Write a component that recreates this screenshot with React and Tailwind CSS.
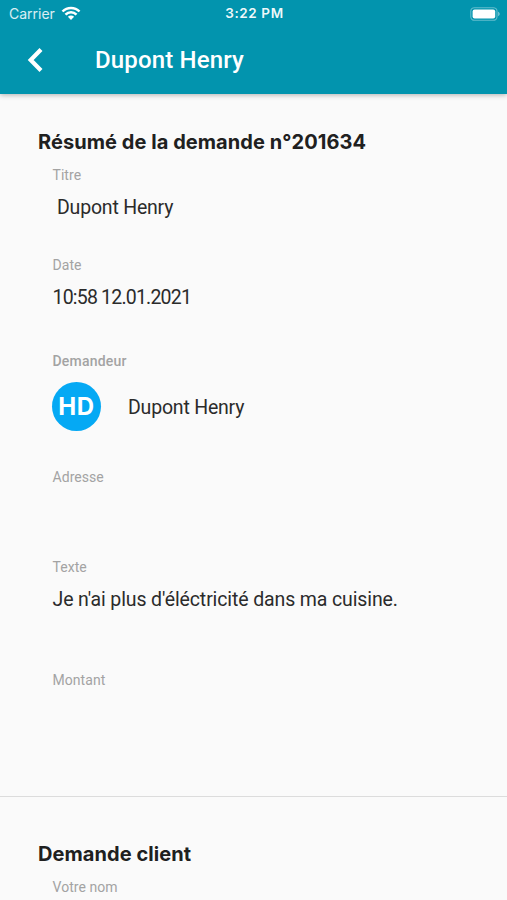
function WifiIcon() {
  return (
    <svg width="20" height="16" viewBox="0 0 20 16" fill="none" stroke="currentColor" strokeWidth="2.5">
      <path d="M1.5 5.5C6.2 0.7 13.8 0.7 18.5 5.5" />
      <path d="M4.5 8.7C7.6 5.5 12.4 5.5 15.5 8.7" />
      <path d="M6.9 10.8C8.7 9.2 11.3 9.2 13.1 10.8L10 14Z" fill="currentColor" stroke="none" />
    </svg>
  );
}

function BatteryIcon() {
  return (
    <svg width="30" height="14" viewBox="0 0 30 14" fill="none">
      <rect x="0.8" y="0.7" width="26.2" height="12.6" rx="3.6" stroke="#fff" strokeOpacity="0.38" strokeWidth="1.1" />
      <rect x="2.6" y="2.4" width="22.6" height="9.2" rx="2" fill="#fff" />
      <path d="M28.2 4.8C30.1 5.5 30.1 8.5 28.2 9.2Z" fill="#fff" fillOpacity="0.5" />
    </svg>
  );
}

function StatusBar() {
  return (
    <div className="grid h-[27px] grid-cols-3 items-center pl-[9px] pr-[7px] font-['Inter',sans-serif] text-[13px]">
      <div className="flex items-center gap-[6px]">
        <span className="text-[14px] text-white/85">Carrier</span>
        <WifiIcon />
      </div>
      <span className="text-center text-[13.5px] font-semibold tracking-[0.6px] text-white/95">3:22 PM</span>
      <div className="flex justify-end">
        <BatteryIcon />
      </div>
    </div>
  );
}

function Header({ title }) {
  return (
    <header className="relative h-[94px] bg-[#0294ae] text-white shadow-[0_1px_5px_rgba(0,0,0,0.3)]">
      <StatusBar />
      <div className="flex h-[65px] items-center">
        <button aria-label="Retour" className="ml-[27px] mr-[51px]">
          <svg width="17" height="26" viewBox="0 0 17 26" fill="none" stroke="currentColor" strokeWidth="4.2">
            <path d="M14 2.6L3.7 13L14 23.4" />
          </svg>
        </button>
        <h1 className="text-[24px] font-medium tracking-[0.15px]">{title}</h1>
      </div>
    </header>
  );
}

function Field({ label, className, labelClass = 'tracking-[0.05px]', children }) {
  return (
    <div className={`ml-[52.5px] ${className}`}>
      <div className={`h-5 text-sm leading-5 text-[#a3a3a3] ${labelClass}`}>{label}</div>
      {children}
    </div>
  );
}

function Value({ className = 'tracking-[-0.12px]', children }) {
  return <p className={`mt-[9px] text-[19.5px] leading-7 ${className}`}>{children}</p>;
}

function SectionTitle({ children }) {
  return (
    <h2 className="ml-[38px] h-7 font-['Inter',sans-serif] text-[20px] font-bold leading-7 tracking-[0.06px] text-[#202020]">
      {children}
    </h2>
  );
}

export default function App() {
  return (
    <div className="h-[900px] w-full overflow-hidden bg-[#fafafa] font-['Roboto',sans-serif] text-[#2b2b2b]">
      <Header title="Dupont Henry" />

      <section className="h-[703px] border-b border-[#dcdcdc] pt-[34px]">
        <SectionTitle>Résumé de la demande n°201634</SectionTitle>
        <Field label="Titre" className="mt-[9px] h-[90px]">
          <Value className="ml-[4.5px] tracking-[-0.2px]">Dupont Henry</Value>
        </Field>
        <Field label="Date" className="h-24">
          <Value className="tracking-[-0.8px]">10:58 12.01.2021</Value>
        </Field>
        <Field label="Demandeur" className="h-[116px]" labelClass="font-medium tracking-[0.2px]">
          <div className="-ml-[0.5px] mt-[11px] flex items-center gap-[27px]">
            <div className="flex size-[49px] items-center justify-center rounded-full bg-[#05a9f4] font-['Inter',sans-serif] text-[24px] font-bold tracking-[0.6px] text-white">
              HD
            </div>
            <span className="pt-[2px] text-[19.5px] tracking-[-0.2px]">Dupont Henry</span>
          </div>
        </Field>
        <Field label="Adresse" className="h-[90px]" />
        <Field label="Texte" className="h-[113px]">
          <Value>Je n'ai plus d'éléctricité dans ma cuisine.</Value>
        </Field>
        <Field label="Montant" className="h-[126px]" />
      </section>

      <section className="pt-[43px]">
        <SectionTitle>Demande client</SectionTitle>
        <Field label="Votre nom" className="mt-[9px]" />
      </section>
    </div>
  );
}
